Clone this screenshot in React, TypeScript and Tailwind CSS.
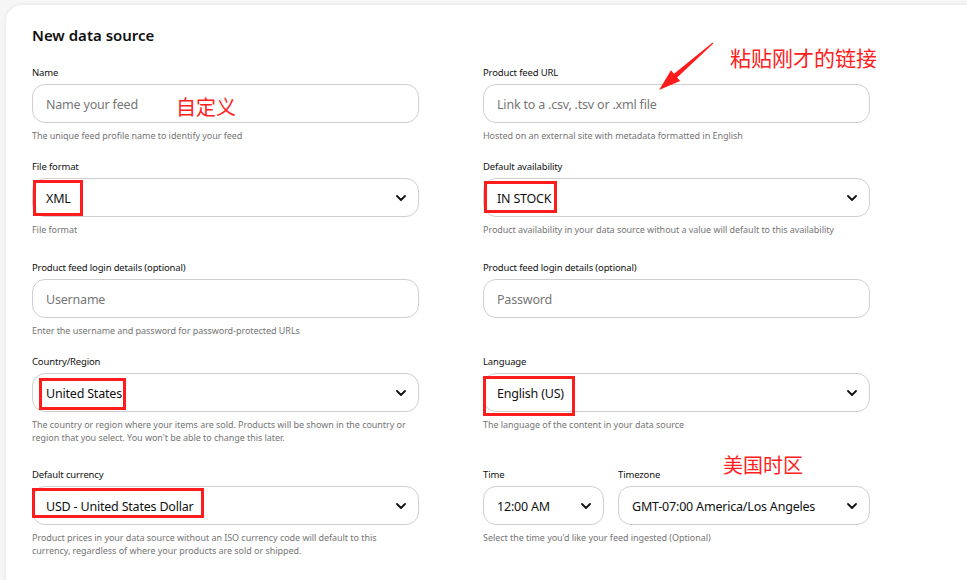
import React from "react";

const font = { fontFamily: '"Noto Sans", "Open Sans", sans-serif' };
const cjk = { fontFamily: '"Noto Sans CJK SC", sans-serif' };

const Chevron = () => (
  <svg width="10" height="6" viewBox="0 0 10 6" fill="none">
    <path d="M1 1l4 4 4-4" stroke="#111" strokeWidth="1.8" strokeLinecap="round" strokeLinejoin="round" />
  </svg>
);

const Label = ({ children }: { children: React.ReactNode }) => (
  <div className="mb-[4px] pt-[1px] text-[9.5px] leading-[14px] tracking-[-0.15px] text-[#111]">{children}</div>
);

const Help = ({ children }: { children: React.ReactNode }) => (
  <div className="mt-[6px] max-w-[380px] text-[9px] leading-[13px] tracking-[-0.05px] text-[#767676]">
    {children}
  </div>
);

const Input = ({ placeholder }: { placeholder: string }) => (
  <div className="flex h-[39px] items-center rounded-[13px] border border-[#cfcfcf] pl-[13px] pt-[3px] text-[12.5px] tracking-[-0.2px] text-[#767676]">
    {placeholder}
  </div>
);

const Select = ({ value, className = "" }: { value: string; className?: string }) => (
  <div
    className={`flex h-[39px] items-center justify-between rounded-[13px] border border-[#cfcfcf] pl-[13px] pr-[12px] text-[12.5px] tracking-[-0.2px] text-[#111] ${className}`}
  >
    <span className="pt-[3px]">{value}</span>
    <Chevron />
  </div>
);

const Box = ({ l, t, w, h }: { l: number; t: number; w: number; h: number }) => (
  <div
    className="pointer-events-none absolute border-[3px] border-[#ff1c1c]"
    style={{ left: l, top: t, width: w, height: h }}
  />
);

export default function App() {
  return (
    <div className="relative h-[580px] w-[967px] overflow-hidden bg-[#f6f6f6]" style={font}>
      <div className="ml-[6px] mt-[5px] h-[600px] w-[990px] rounded-tl-[16px] bg-white pl-[26px] pt-[20px] shadow-[0_0_4px_rgba(0,0,0,0.08)]">
        <h1 className="text-[15px] font-semibold leading-[20px] text-[#111]">New data source</h1>

        <div className="mt-[20px] grid w-[838px] grid-cols-2 gap-x-[64px]">
          <div>
            <Label>Name</Label>
            <Input placeholder="Name your feed" />
            <Help>The unique feed profile name to identify your feed</Help>
          </div>
          <div>
            <Label>Product feed URL</Label>
            <Input placeholder="Link to a .csv, .tsv or .xml file" />
            <Help>Hosted on an external site with metadata formatted in English</Help>
          </div>
        </div>

        <div className="mt-[17px] grid w-[838px] grid-cols-2 gap-x-[64px]">
          <div>
            <Label>File format</Label>
            <Select value="XML" />
            <Help>File format</Help>
          </div>
          <div>
            <Label>Default availability</Label>
            <Select value="IN STOCK" className="border-[#8a8a8a]" />
            <Help>Product availability in your data source without a value will default to this availability</Help>
          </div>
        </div>

        <div className="mt-[24px] grid w-[838px] grid-cols-2 gap-x-[64px]">
          <div>
            <Label>Product feed login details (optional)</Label>
            <Input placeholder="Username" />
            <Help>Enter the username and password for password-protected URLs</Help>
          </div>
          <div>
            <Label>Product feed login details (optional)</Label>
            <Input placeholder="Password" />
          </div>
        </div>

        <div className="mt-[17px] grid w-[838px] grid-cols-2 gap-x-[64px]">
          <div>
            <Label>Country/Region</Label>
            <Select value="United States" />
            <Help>
              The country or region where your items are sold. Products will be shown in the country or region that
              you select. You won't be able to change this later.
            </Help>
          </div>
          <div>
            <Label>Language</Label>
            <Select value="English (US)" />
            <Help>The language of the content in your data source</Help>
          </div>
        </div>

        <div className="mt-[23px] grid w-[838px] grid-cols-2 gap-x-[64px]">
          <div>
            <Label>Default currency</Label>
            <Select value="USD - United States Dollar" />
            <Help>
              Product prices in your data source without an ISO currency code will default to this currency,
              regardless of where your products are sold or shipped.
            </Help>
          </div>
          <div>
            <div className="flex gap-[14px]">
              <div className="w-[121px]">
                <Label>Time</Label>
                <Select value="12:00 AM" />
              </div>
              <div className="flex-1">
                <Label>Timezone</Label>
                <Select value="GMT-07:00 America/Los Angeles" />
              </div>
            </div>
            <Help>Select the time you'd like your feed ingested (Optional)</Help>
          </div>
        </div>
      </div>

      {/* annotations */}
      <Box l={33} t={180} w={50} h={36} />
      <Box l={484} t={181} w={73} h={32} />
      <Box l={39} t={378} w={87} h={32} />
      <Box l={483} t={376} w={92} h={40} />
      <Box l={32} t={488} w={172} h={30} />

      <div className="absolute left-[176px] top-[94px] text-[20px] leading-[26px] text-[#ff2020]" style={cjk}>
        自定义
      </div>
      <div className="absolute left-[730px] top-[43px] text-[21px] leading-[28px] text-[#ff2020]" style={cjk}>
        粘贴刚才的链接
      </div>
      <div className="absolute left-[723px] top-[452px] text-[20px] leading-[26px] text-[#ff2020]" style={cjk}>
        美国时区
      </div>
      <svg className="absolute left-[650px] top-[35px]" width="70" height="60" viewBox="650 35 70 60">
        <polygon
          points="659,90 680.2,80.9 677.2,77.5 713.3,43.4 712.7,42.6 674,73.7 671,70.3"
          fill="#ff1c1c"
        />
      </svg>
    </div>
  );
}
